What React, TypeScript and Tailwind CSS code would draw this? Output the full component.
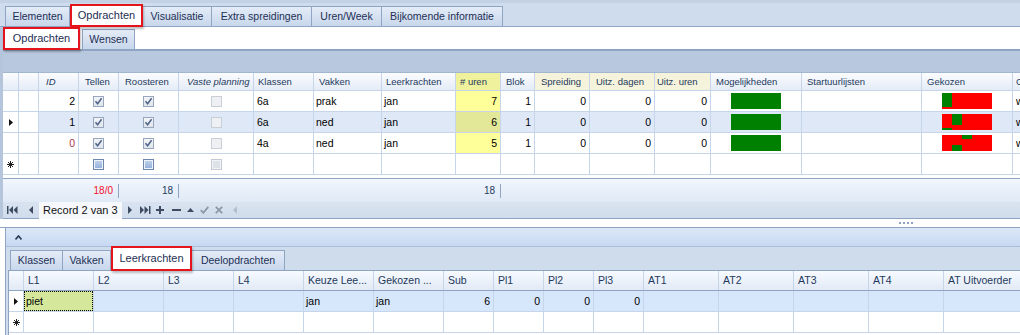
import React from "react";

type Col = { cls: string; h: string; hcls?: string; italic?: boolean };

const topCols: Col[] = [
  { cls: "w-[16px]", h: "" },
  { cls: "w-[20px]", h: "" },
  { cls: "w-[40px]", h: "ID", italic: true, hcls: "pl-[7px]" },
  { cls: "w-[40px]", h: "Tellen", hcls: "pl-[6px]" },
  { cls: "w-[60px]", h: "Roosteren", hcls: "pl-[6px]" },
  { cls: "w-[75px]", h: "Vaste planning", italic: true, hcls: "pl-[8px]" },
  { cls: "w-[60px]", h: "Klassen", hcls: "pl-[4px]" },
  { cls: "w-[68px]", h: "Vakken" },
  { cls: "w-[74px]", h: "Leerkrachten", hcls: "pl-[4px]" },
  { cls: "w-[45px]", h: "# uren", hcls: "pl-[4px] bg-[#eff19c]" },
  { cls: "w-[34px]", h: "Blok" },
  { cls: "w-[55px]", h: "Spreiding", hcls: "pl-[6px] bg-[#f5f3dc]" },
  { cls: "w-[65px]", h: "Uitz. dagen", hcls: "pl-[6px] bg-[#f5f3dc]" },
  { cls: "w-[56px]", h: "Uitz. uren", hcls: "pl-[2px] bg-[#f5f3dc]" },
  { cls: "w-[91px]", h: "Mogelijkheden" },
  { cls: "w-[120px]", h: "Startuurlijsten" },
  { cls: "w-[91px]", h: "Gekozen" },
  { cls: "w-[80px]", h: "Gebruikt", hcls: "pl-[3px]" },
];

type Row = {
  id: string;
  idRed?: boolean;
  klas: string;
  vak: string;
  lk: string;
  uren: string;
  sel?: boolean;
  g: number;
};

const rows: Row[] = [
  { id: "2", klas: "6a", vak: "prak", lk: "jan", uren: "7", g: 0 },
  { id: "1", klas: "6a", vak: "ned", lk: "jan", uren: "6", sel: true, g: 1 },
  { id: "0", idRed: true, klas: "4a", vak: "ned", lk: "jan", uren: "5", g: 2 },
];

function Box({ v }: { v: "on" | "off" | "ind" | "indoff" }) {
  if (v === "on")
    return (
      <span className="inline-flex w-[11px] h-[11px] border border-[#98a7bd] bg-linear-to-b from-[#f3f5f8] to-[#dfe5ec] items-center justify-center">
        <svg width="9" height="9" viewBox="0 0 9 9">
          <path d="M1.5 4.2 L3.6 6.8 L7.6 1.2" stroke="#4f6488" strokeWidth="1.5" fill="none" />
        </svg>
      </span>
    );
  if (v === "off")
    return <span className="inline-block w-[11px] h-[11px] border border-[#c9cfd7] bg-[#eef0f3]" />;
  if (v === "ind")
    return (
      <span className="inline-flex w-[11px] h-[11px] border border-[#6f87ab] bg-[#eef3fa] p-[1px]">
        <span className="block w-full h-full bg-linear-to-b from-[#bcd0ea] to-[#97b3da]" />
      </span>
    );
  return (
    <span className="inline-flex w-[11px] h-[11px] border border-[#c3cad4] bg-[#f1f3f6] p-[1px]">
      <span className="block w-full h-full bg-[#dde2e9]" />
    </span>
  );
}

function Gekozen({ k }: { k: number }) {
  return (
    <svg width="50" height="16" viewBox="0 0 50 16">
      <rect x="0" y="0" width="50" height="16" fill="#ff0000" />
      {k === 0 && <rect x="0" y="0" width="10" height="14" fill="#008000" />}
      {k === 1 && (
        <>
          <rect x="10" y="0" width="10" height="11" fill="#008000" />
          <rect x="0" y="14" width="10" height="2" fill="#008000" />
        </>
      )}
      {k === 2 && (
        <>
          <rect x="20" y="0" width="10" height="4" fill="#008000" />
          <rect x="10" y="10" width="10" height="6" fill="#008000" />
        </>
      )}
    </svg>
  );
}

function Asterisk() {
  return (
    <svg width="7" height="7" viewBox="0 0 7 7">
      <path d="M3.5 0 V7 M0 3.5 H7 M1 1 L6 6 M6 1 L1 6" stroke="#222" strokeWidth="1" fill="none" />
    </svg>
  );
}

function Pointer() {
  return (
    <svg width="4" height="7" viewBox="0 0 4 7">
      <path d="M0 0 L4 3.5 L0 7 Z" fill="#111" />
    </svg>
  );
}

const cellB = "shrink-0 h-full border-r border-[#c6d5ea] flex items-center overflow-hidden whitespace-nowrap";

function TopRow({ r }: { r: Row }) {
  const bg = r.sel ? "bg-[#dfe8f6]" : "bg-white";
  return (
    <div className="flex h-[21px] border-b border-[#c6d5ea]">
      <div className={`${cellB} w-[16px] bg-white justify-center`}>{r.sel && <Pointer />}</div>
      <div className={`${cellB} w-[20px] bg-white`} />
      <div className={`${cellB} w-[40px] ${bg} justify-end pr-[3px] ${r.idRed ? "text-[#b0344c]" : ""}`}>{r.id}</div>
      <div className={`${cellB} w-[40px] ${bg} justify-center`}><Box v="on" /></div>
      <div className={`${cellB} w-[60px] ${bg} justify-center`}><Box v="on" /></div>
      <div className={`${cellB} w-[75px] ${bg} justify-center`}><Box v="off" /></div>
      <div className={`${cellB} w-[60px] ${bg} pl-[3px]`}>{r.klas}</div>
      <div className={`${cellB} w-[68px] ${bg} pl-[2px]`}>{r.vak}</div>
      <div className={`${cellB} w-[74px] ${bg} pl-[2px]`}>{r.lk}</div>
      <div className={`${cellB} w-[45px] ${r.sel ? "bg-[#e3e898]" : "bg-[#ffff99]"} justify-end pr-[3px]`}>{r.uren}</div>
      <div className={`${cellB} w-[34px] ${bg} justify-end pr-[3px]`}>1</div>
      <div className={`${cellB} w-[55px] ${bg} justify-end pr-[3px]`}>0</div>
      <div className={`${cellB} w-[65px] ${bg} justify-end pr-[3px]`}>0</div>
      <div className={`${cellB} w-[56px] ${bg} justify-end pr-[3px]`}>0</div>
      <div className={`${cellB} w-[91px] ${bg} justify-center`}>
        <span className="block w-[50px] h-[16px] bg-[#008000]" />
      </div>
      <div className={`${cellB} w-[120px] ${bg}`} />
      <div className={`${cellB} w-[91px] ${bg} justify-center`}><Gekozen k={r.g} /></div>
      <div className={`${cellB} w-[80px] ${bg} pl-[3px]`}>week</div>
    </div>
  );
}

function NewRow() {
  return (
    <div className="flex h-[21px] border-b border-[#c6d5ea] bg-white">
      <div className={`${cellB} w-[16px] justify-center`}><Asterisk /></div>
      <div className={`${cellB} w-[20px]`} />
      <div className={`${cellB} w-[40px]`} />
      <div className={`${cellB} w-[40px] justify-center`}><Box v="ind" /></div>
      <div className={`${cellB} w-[60px] justify-center`}><Box v="ind" /></div>
      <div className={`${cellB} w-[75px] justify-center`}><Box v="indoff" /></div>
      {["w-[60px]", "w-[68px]", "w-[74px]", "w-[45px]", "w-[34px]", "w-[55px]", "w-[65px]", "w-[56px]", "w-[91px]", "w-[120px]", "w-[91px]", "w-[80px]"].map((c, i) => (
        <div key={i} className={`${cellB} ${c}`} />
      ))}
    </div>
  );
}

function Tab({ label, w, sel, small }: { label: string; w: string; sel?: boolean; small?: boolean }) {
  if (sel)
    return (
      <div className={`${w} ${small ? "h-[25px]" : "h-[23px]"} -mb-px shrink-0 bg-white border-2 border-[#e3141c] shadow-[1px_2px_2px_rgba(0,0,0,0.25)] flex items-center justify-center text-[#1e2f55] relative z-10 text-[11px] whitespace-nowrap`}>
        {label}
      </div>
    );
  return (
    <div className={`${w} h-[20px] shrink-0 border border-b-0 border-[#8fa5c3] -ml-px bg-linear-to-b from-[#e4ecf7] to-[#c8d7ec] flex items-center justify-center text-[#1e2f55] text-[10.5px] whitespace-nowrap`}>
      {label}
    </div>
  );
}

const bCols = [
  { cls: "w-[70px]", h: "L1" },
  { cls: "w-[70px]", h: "L2" },
  { cls: "w-[70px]", h: "L3" },
  { cls: "w-[70px]", h: "L4" },
  { cls: "w-[70px]", h: "Keuze Lee..." },
  { cls: "w-[70px]", h: "Gekozen ..." },
  { cls: "w-[50px]", h: "Sub" },
  { cls: "w-[50px]", h: "Pl1" },
  { cls: "w-[50px]", h: "Pl2" },
  { cls: "w-[50px]", h: "Pl3" },
  { cls: "w-[75px]", h: "AT1" },
  { cls: "w-[75px]", h: "AT2" },
  { cls: "w-[75px]", h: "AT3" },
  { cls: "w-[75px]", h: "AT4" },
  { cls: "w-[80px]", h: "AT Uitvoerder" },
];

const bVals = ["piet", "", "", "", "jan", "jan", "6", "0", "0", "0", "", "", "", "", ""];

export default function App() {
  return (
    <div className="w-[1020px] h-[335px] overflow-hidden bg-white flex flex-col font-['Liberation_Sans',Arial,sans-serif] text-[10.5px] leading-none text-black select-none">
      {/* top tab strip */}
      <div className="h-[27px] shrink-0 bg-[#cfdcee] border-t-[3px] border-t-[#c4d2e6] border-b border-b-[#8fa5c3] flex items-end pl-[6px]">
        <Tab label="Elementen" w="w-[65px]" />
        <Tab label="Opdrachten" w="w-[73px]" sel />
        <Tab label="Visualisatie" w="w-[70px]" />
        <Tab label="Extra spreidingen" w="w-[101px]" />
        <Tab label="Uren/Week" w="w-[71px]" />
        <Tab label="Bijkomende informatie" w="w-[122px]" />
      </div>

      {/* upper content */}
      <div className="shrink-0 border-l-[3px] border-[#b4c5dc] flex flex-col">
        <div className="h-[24px] bg-white border-b-2 border-[#8ea4c2] flex items-end">
          <Tab label="Opdrachten" w="w-[77px]" sel />
          <div className="mb-[-1px] flex items-end">
            <div className="w-[53px] h-[21px] ml-[2px] shrink-0 border border-[#8fa5c3] bg-linear-to-b from-[#e4ecf7] to-[#c8d7ec] flex items-center justify-center text-[#1e2f55] text-[10.5px]">
              Wensen
            </div>
          </div>
        </div>
        <div className="h-[21px] bg-[#b8c9df]" />

        {/* grid header */}
        <div className="flex h-[19px] border-t border-[#a3b6d0] border-b border-b-[#c6d5ea] bg-linear-to-b from-[#fbfcfe] to-[#e4ecf7] text-[#1e395b] text-[9.5px]">
          {topCols.map((c, i) => (
            <div key={i} className={`${cellB} ${c.cls} ${c.hcls ?? "pl-[5px]"} ${c.italic ? "italic" : ""}`}>
              {c.h}
            </div>
          ))}
        </div>
        {rows.map((r, i) => (
          <TopRow key={i} r={r} />
        ))}
        <NewRow />
        <div className="h-[3px] bg-white" />

        {/* footer summary */}
        <div className="h-[24px] border-t border-[#8fa5c3] bg-linear-to-b from-[#f1f6fd] to-[#e0e9f6] flex items-center text-[10px]">
          <div className="w-[76px] shrink-0" />
          <div className="w-[40px] shrink-0 h-[14px] border-r border-[#8fa5c3] flex items-center justify-end pr-[5px] text-[#f0102c]">18/0</div>
          <div className="w-[60px] shrink-0 h-[14px] border-r border-[#8fa5c3] flex items-center justify-end pr-[5px] text-[#1e395b]">18</div>
          <div className="w-[277px] shrink-0" />
          <div className="w-[45px] shrink-0 h-[14px] border-r border-[#8fa5c3] flex items-center justify-end pr-[5px] text-[#1e395b]">18</div>
        </div>

        {/* navigator */}
        <div className="h-[17px] bg-linear-to-b from-[#d9e3f0] to-[#d0dcec] border-b border-[#8ea4c2] flex items-center">
          <svg width="12" height="8" viewBox="0 0 12 8" className="ml-[4px]">
            <rect x="0" y="0" width="1.5" height="8" fill="#3d4c63" />
            <path d="M6 0 L2 4 L6 8 Z M10.5 0 L6.5 4 L10.5 8 Z" fill="#3d4c63" />
          </svg>
          <svg width="4" height="8" viewBox="0 0 4 8" className="ml-[10px]">
            <path d="M4 0 L0 4 L4 8 Z" fill="#3d4c63" />
          </svg>
          <div className="ml-[6px] w-[83px] h-[17px] bg-[#f6f8fc] flex items-center pl-[4px] text-[11px] text-[#111] whitespace-nowrap">Record 2 van 3</div>
          <svg width="4" height="8" viewBox="0 0 4 8" className="ml-[6px]">
            <path d="M0 0 L4 4 L0 8 Z" fill="#3d4c63" />
          </svg>
          <svg width="11" height="8" viewBox="0 0 11 8" className="ml-[8px]">
            <path d="M0 0 L4 4 L0 8 Z M4.5 0 L8.5 4 L4.5 8 Z" fill="#3d4c63" />
            <rect x="9" y="0" width="1.5" height="8" fill="#3d4c63" />
          </svg>
          <svg width="8" height="8" viewBox="0 0 8 8" className="ml-[5px]">
            <path d="M3 0 H5 V3 H8 V5 H5 V8 H3 V5 H0 V3 H3 Z" fill="#3d4c63" />
          </svg>
          <svg width="9" height="2" viewBox="0 0 9 2" className="ml-[8px]">
            <rect x="0" y="0" width="9" height="2" fill="#3d4c63" />
          </svg>
          <svg width="7" height="4" viewBox="0 0 7 4" className="ml-[6px]">
            <path d="M0 4 L3.5 0 L7 4 Z" fill="#3d4c63" />
          </svg>
          <svg width="9" height="8" viewBox="0 0 9 8" className="ml-[6px]">
            <path d="M0.8 4 L3.3 6.8 L8.3 0.8" stroke="#8d97a6" strokeWidth="1.8" fill="none" />
          </svg>
          <svg width="8" height="8" viewBox="0 0 8 8" className="ml-[6px]">
            <path d="M0.8 0.8 L7.2 7.2 M7.2 0.8 L0.8 7.2" stroke="#8d97a6" strokeWidth="1.8" fill="none" />
          </svg>
          <svg width="4" height="8" viewBox="0 0 4 8" className="ml-[10px]">
            <path d="M4 0 L0 4 L4 8 Z" fill="#b4bfcd" />
          </svg>
        </div>
      </div>

      {/* splitter */}
      <div className="h-[9px] shrink-0 bg-white border-b border-[#8ea4c2] flex items-center justify-end pr-[107px]">
        <span className="w-[2px] h-[2px] bg-[#8ea4c2]" />
        <span className="ml-[2px] w-[2px] h-[2px] bg-[#8ea4c2]" />
        <span className="ml-[2px] w-[2px] h-[2px] bg-[#8ea4c2]" />
        <span className="ml-[2px] w-[2px] h-[2px] bg-[#8ea4c2]" />
      </div>

      {/* bottom panel */}
      <div className="flex-1 bg-white pl-[5px] flex">
        <div className="flex-1 border-l border-[#8ea4c2] flex flex-col bg-[#cfdcec]">
          <div className="h-[19px] shrink-0 bg-linear-to-b from-[#dce8f8] to-[#c6d9f2] border-b border-[#a9bedb] flex items-center pl-[9px]">
            <svg width="7" height="5" viewBox="0 0 7 5">
              <path d="M0.5 4.5 L3.5 1 L6.5 4.5" stroke="#2a3a55" strokeWidth="1.6" fill="none" />
            </svg>
          </div>
          <div className="h-[23px] shrink-0 flex items-end pl-[5px]">
            <Tab label="Klassen" w="w-[53px]" />
            <Tab label="Vakken" w="w-[49px]" />
            <Tab label="Leerkrachten" w="w-[81px]" sel small />
            <Tab label="Deelopdrachten" w="w-[94px]" />
          </div>
          <div className="flex-1 ml-[2px] border-l border-[#8ea4c2] bg-white flex flex-col">
            <div className="flex h-[21px] border-t border-b border-[#8ea4c2] bg-linear-to-b from-[#f7faff] to-[#e2eaf6] text-[#1e395b] text-[10.5px]">
              <div className={`${cellB} w-[15px] border-[#b2c3da]`} />
              {bCols.map((c, i) => (
                <div key={i} className={`${cellB} ${c.cls} border-[#b2c3da] pl-[4px]`}>
                  {c.h}
                </div>
              ))}
            </div>
            <div className="flex h-[21px] border-b border-[#c6d5ea] bg-[#d6e6fb]">
              <div className={`${cellB} w-[15px] bg-white justify-center`}><Pointer /></div>
              {bCols.map((c, i) => {
                const v = bVals[i];
                const num = i >= 6 && i <= 9;
                if (i === 0)
                  return (
                    <div key={i} className={`${cellB} ${c.cls}`}>
                      <div className="w-full h-full bg-[#d5e79b] border border-dotted border-black flex items-center pl-[1px]">{v}</div>
                    </div>
                  );
                return (
                  <div key={i} className={`${cellB} ${c.cls} ${num ? "justify-end pr-[3px]" : "pl-[2px]"}`}>
                    {v}
                  </div>
                );
              })}
            </div>
            <div className="flex h-[21px] border-b border-[#c6d5ea] bg-white">
              <div className={`${cellB} w-[15px] justify-center`}><Asterisk /></div>
              {bCols.map((c, i) => (
                <div key={i} className={`${cellB} ${c.cls}`} />
              ))}
            </div>
          </div>
        </div>
      </div>
    </div>
  );
}
